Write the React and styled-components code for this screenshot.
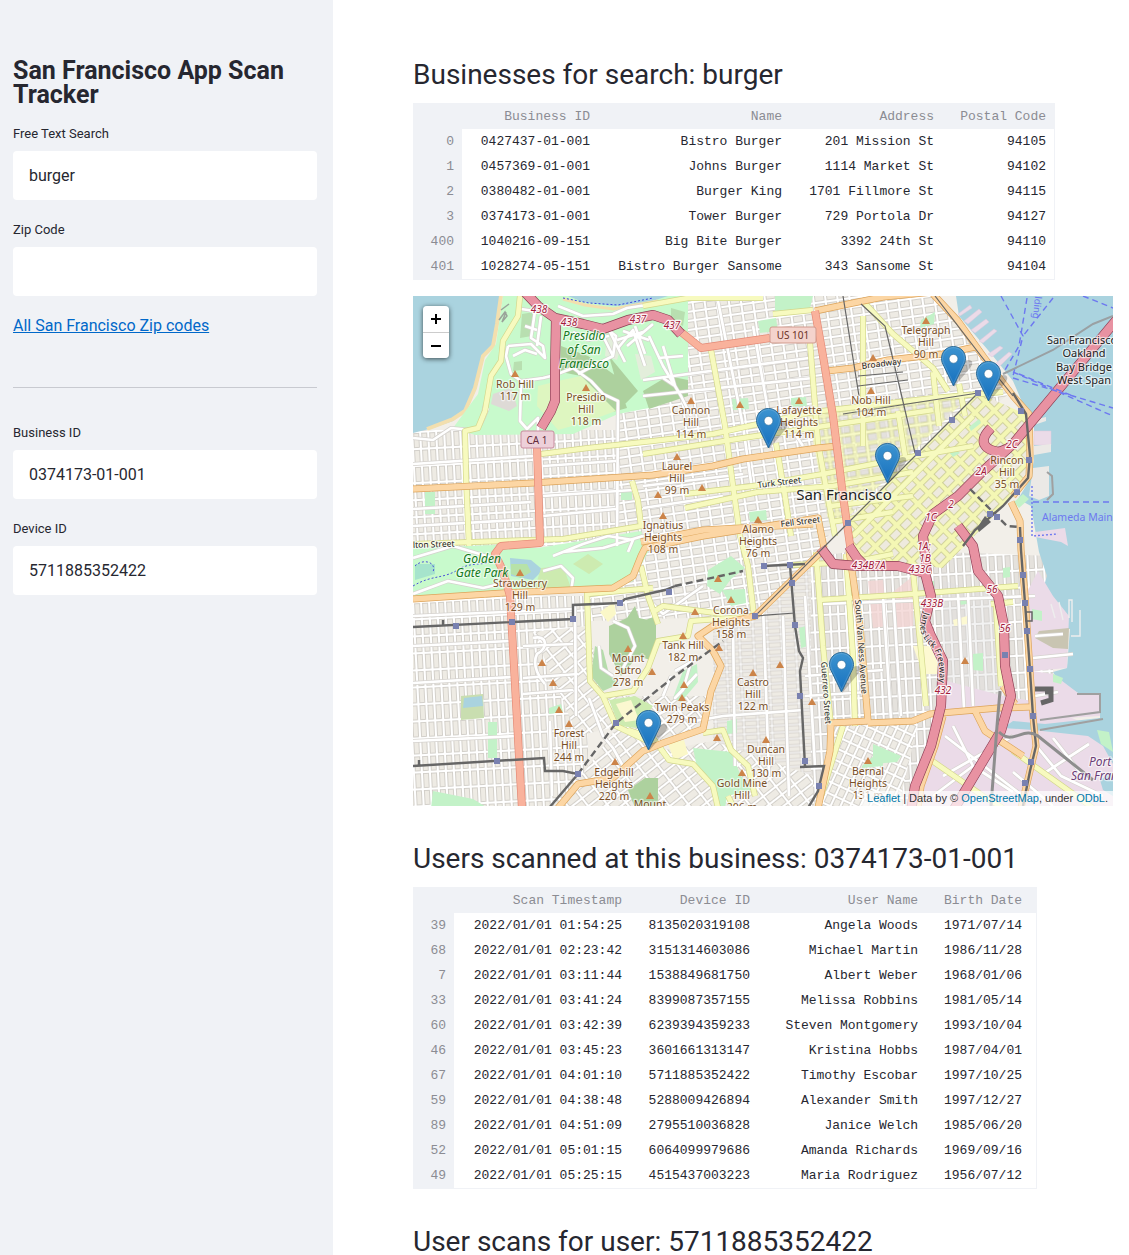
import React, { useState } from "react";
import styled, { createGlobalStyle } from "styled-components";

const sans = '"Roboto", "Liberation Sans", sans-serif';
const mono = '"Liberation Mono", monospace';
const ink = "#262730";
const panel = "#f0f2f6";

const GlobalStyle = createGlobalStyle`
  *, *::before, *::after { box-sizing: border-box; }
  body { margin: 0; background: #fff; color: ${ink}; font-family: ${sans}; }
`;

/* ---------- layout ---------- */

const Shell = styled.div`
  display: flex;
  height: 100vh;
`;

const Sidebar = styled.aside`
  flex: 0 0 333px;
  padding: 59px 16px 16px 13px;
  background: ${panel};
  overflow: hidden;
`;

const Title = styled.h1`
  margin: 0 0 17px;
  font-size: 25px;
  line-height: 24px;
  font-weight: 700;
`;

const FieldBox = styled.div`
  display: flex;
  flex-direction: column;
  gap: 7px;
  margin-bottom: 20px;
`;

const Label = styled.label`
  font-size: 13px;
  line-height: 20px;
`;

const TextInput = styled.input`
  width: 100%;
  height: 49px;
  padding: 0 16px;
  border: 0;
  border-radius: 4px;
  background: #fff;
  color: ${ink};
  font-family: ${sans};
  font-size: 16px;
`;

const ZipLink = styled.a`
  display: block;
  width: fit-content;
  color: #0068c9;
  font-size: 16px;
  line-height: 20px;
`;

const Divider = styled.hr`
  margin: 51px 0 35px;
  border: 0;
  border-top: 1px solid #c8cad0;
`;

const Main = styled.main`
  flex: 1;
  min-width: 0;
  padding: 22px 16px 16px 80px;
  overflow-y: auto;
  scrollbar-width: none;
`;

const Heading = styled.h2`
  margin: 0;
  padding: 35px 0 10px;
  font-size: 28px;
  line-height: 36px;
  font-weight: 400;
`;

/* ---------- tables ---------- */

const Table = styled.table`
  table-layout: fixed;
  width: ${(p) => p.$width}px;
  border-collapse: separate;
  border-spacing: 0;
  border: 1px solid ${panel};
  font-family: ${mono};
  font-size: 13px;
`;

const Cell = styled.td`
  height: 25px;
  padding: 0 8px;
  text-align: right;
  white-space: nowrap;
  &:last-child { padding-right: ${(p) => p.$end}px; }
`;

const HeadCell = styled(Cell)`
  background: ${panel};
  color: #8b8c93;
  font-weight: 400;
`;

function DataTable({ columns, widths, rows, end }) {
  return (
    <Table $width={widths.reduce((a, b) => a + b, 2)}>
      <colgroup>
        {widths.map((w, i) => <col key={i} width={w} />)}
      </colgroup>
      <thead>
        <tr>
          <HeadCell as="td" />
          {columns.map((c) => <HeadCell as="th" scope="col" key={c} $end={end}>{c}</HeadCell>)}
        </tr>
      </thead>
      <tbody>
        {rows.map(([id, ...cells]) => (
          <tr key={id}>
            <HeadCell as="th" scope="row">{id}</HeadCell>
            {cells.map((c, i) => <Cell key={i} $end={end}>{c}</Cell>)}
          </tr>
        ))}
      </tbody>
    </Table>
  );
}

const businesses = [
  ["0", "0427437-01-001", "Bistro Burger", "201 Mission St", "94105"],
  ["1", "0457369-01-001", "Johns Burger", "1114 Market St", "94102"],
  ["2", "0380482-01-001", "Burger King", "1701 Fillmore St", "94115"],
  ["3", "0374173-01-001", "Tower Burger", "729 Portola Dr", "94127"],
  ["400", "1040216-09-151", "Big Bite Burger", "3392 24th St", "94110"],
  ["401", "1028274-05-151", "Bistro Burger Sansome", "343 Sansome St", "94104"],
];

const scans = [
  ["39", "2022/01/01 01:54:25", "8135020319108", "Angela Woods", "1971/07/14"],
  ["68", "2022/01/01 02:23:42", "3151314603086", "Michael Martin", "1986/11/28"],
  ["7", "2022/01/01 03:11:44", "1538849681750", "Albert Weber", "1968/01/06"],
  ["33", "2022/01/01 03:41:24", "8399087357155", "Melissa Robbins", "1981/05/14"],
  ["60", "2022/01/01 03:42:39", "6239394359233", "Steven Montgomery", "1993/10/04"],
  ["46", "2022/01/01 03:45:23", "3601661313147", "Kristina Hobbs", "1987/04/01"],
  ["67", "2022/01/01 04:01:10", "5711885352422", "Timothy Escobar", "1997/10/25"],
  ["59", "2022/01/01 04:38:48", "5288009426894", "Alexander Smith", "1997/12/27"],
  ["89", "2022/01/01 04:51:09", "2795510036828", "Janice Welch", "1985/06/20"],
  ["52", "2022/01/01 05:01:15", "6064099979686", "Amanda Richards", "1969/09/16"],
  ["49", "2022/01/01 05:25:15", "4515437003223", "Maria Rodriguez", "1956/07/12"],
];

/* ---------- map ---------- */

const MapFrame = styled.div`
  position: relative;
  max-width: 700px;
  height: 510px;
  margin-top: 16px;
  overflow: hidden;
  background: #f2efe9;
`;

const MapDrawing = styled.svg`
  display: block;
  width: 100%;
  height: 100%;
  font-family: "Noto Sans", "Open Sans", sans-serif;
`;

const ZoomControl = styled.div`
  position: absolute;
  top: 10px;
  left: 10px;
  display: flex;
  flex-direction: column;
  width: 26px;
  border-radius: 4px;
  box-shadow: 0 1px 5px rgba(0, 0, 0, 0.65);
  overflow: hidden;
`;

const ZoomButton = styled.button`
  height: 26px;
  padding: 0;
  border: 0;
  background: #fff;
  color: #000;
  display: grid;
  place-items: center;
  & + & { border-top: 1px solid #ccc; }
`;

const Attribution = styled.div`
  position: absolute;
  right: 0;
  bottom: 0;
  padding: 0 5px;
  background: rgba(255, 255, 255, 0.7);
  color: #333;
  font-family: "Liberation Sans", Arial, sans-serif;
  font-size: 11px;
  line-height: 15px;
  a { color: #0078a8; text-decoration: none; }
`;

const roadStyles = {
  minor: ["#d5d2ce", "#ffffff", 4],
  yellow: ["#d3d78b", "#f7fabf", 6],
  orange: ["#dda45a", "#fcd6a4", 7],
  trunk: ["#e58a76", "#f9b29c", 8],
  motorway: ["#8d3f55", "#e892a2", 10],
};

const roads = {
  minor: [
    "M95 50L93 60L98 78L108 85L130 82L142 79L160 72L178 85L190 98L205 105L204 250",
    "M95 50L118 48L132 62L130 50L118 42L122 15L108 13M128 20L124 50M145 10L170 20L200 18L214 12L240 8",
    "M165 78L180 70L200 60L203 40L190 30M200 60L185 30M205 52L220 34L226 52L232 70M214 50L240 28M210 35L236 44",
    "M236 40L250 70L268 100L278 120M245 62L270 60M250 50L262 90L250 82M160 36L175 44L196 40M192 28L180 36M196 34L212 66M222 30L232 58M204 44L230 36",
    "M108 88L107 125L114 133L125 122L125 135M75 112L68 128L72 108M0 142L20 144L38 132L58 134M100 60L112 54L124 58M112 30L124 34",
    "M0 262L40 250L80 262M0 298L35 285L70 292L95 286M130 275L148 270L160 282L158 296M140 260L170 248L195 240L220 244L215 256M150 256L190 252L230 240",
    "M180 302L180 310M162 309L163 420M137 425L139 500M120 342C134 338 136 352 124 358C118 370 128 384 132 388",
    "M200 325L215 332L222 350L210 372M186 350L188 372L200 380M176 402L190 440L200 452L210 470M232 300L250 318L290 290",
    "M0 320L160 313M410 308L622 300M0 387L98 381M0 350L96 345M110 382L165 378M0 445L105 440M110 398L160 394M110 350L160 348",
    "M262 375L278 366L270 394L262 402L284 378M258 380L250 400M242 420L262 410L270 420L282 425L310 420L390 414",
    "M305 5L318 70L330 130L340 200M340 30L356 120M230 84L396 62M230 100L400 82M230 190L330 178M230 212L310 200M370 120L390 150",
    "M320 330L322 470M350 310L356 480M370 320L376 500M392 300L402 470M392 380L470 374M392 400L455 396",
    "M480 296L488 420M470 300L478 424M555 296L560 410M545 298L551 412M532 440L610 500M530 480L600 440M520 500L560 470M540 430L560 470L600 496",
    "M0 168L120 160M130 170L203 165M0 213L118 206M0 230L120 223M130 200L220 194M130 220L203 213",
    "M620 362L660 358M622 340L650 338M622 400L645 396M625 452L648 480L690 500M640 442L670 480M630 478L676 448M600 476L640 510",
  ],
  yellow: [
    "M107 0L105 20L90 45L88 65L78 80L72 115L65 132L52 135L53 180L56 250",
    "M128 158L175 152L240 145L300 138L400 116L520 102L590 96",
    "M230 158L330 142L425 128L520 114",
    "M0 248L150 243L228 230L225 205L219 185",
    "M298 54L312 130L320 190L327 240L335 270L341 320",
    "M363 147L372 200L378 240M397 47L405 147L422 240",
    "M272 198L340 190L410 178L480 164L560 150M272 212L345 196L420 190L500 176",
    "M230 10L275 2L350 2M360 18L400 14M450 5L480 38L520 72L535 95M520 76L526 130M546 88L552 120",
    "M174 296L177 385L190 400L203 430L220 438L245 450M174 298L240 292M190 400L220 395L235 372L245 345L275 340L278 325L345 320",
    "M215 434L240 442L256 464L280 468L300 490L305 512M290 437L310 434L318 454L335 470L342 500M315 500L320 510",
    "M403 256L410 350L418 430M433 258L440 360L442 430M500 275L508 355L513 410M583 310L588 390",
    "M240 316L250 310L310 318M228 270L235 300L245 328",
    "M405 304L500 298L605 290M578 308L600 306M430 430L405 510M515 462L570 500L590 512M600 455L680 512",
    "M380 269L440 266L480 258M418 210L500 200M418 226L480 216M440 240L500 180L560 120M485 115L492 160M450 20L450 150",
  ],
  orange: [
    "M0 193L120 187L240 179L300 170L330 163L405 152L425 150",
    "M0 303L90 297L200 292L220 280L228 260L232 252L290 240L405 222L411 252",
    "M228 246L290 234L400 228",
    "M402 15L440 7L470 1L520 -4M414 75L440 72L475 64L530 58L562 51",
    "M520 -2L545 25L570 60L600 100L616 118L617 160L616 180L600 200",
    "M598 206L607 225L608 254L612 300L616 360L620 420L623 450L617 475L608 512",
    "M410 254L342 320L300 330L285 340L300 355L308 370L298 395L290 433L250 447L230 455L200 482L165 488L145 512",
    "M436 254L447 330L455 425L418 427L417 455L405 512",
    "M455 427L500 425L517 418L585 412L617 411M562 415L572 435L610 460M530 420L522 450L508 490L505 512M590 390L602 408",
  ],
  trunk: [
    "M124 150L127 247L88 250L82 258L90 275L97 300L101 370L106 460L109 512",
    "M268 36L288 52L357 42M402 15L410 60L420 120L430 200L438 256",
  ],
  motorway: [
    "M108 -8L125 10L142 22L170 28L190 33L215 24L240 19L255 24L268 38",
    "M143 22L142 75L142 105L138 115L128 132",
    "M408 252L420 268L445 270L485 270L512 277L518 300L512 325L518 340L530 365L528 410L518 450L502 490L498 515",
    "M514 278L510 240L520 218L545 200L570 175L600 148L705 22",
    "M545 230L560 250L565 275L585 300L591 330L592 370L598 400L588 435L570 465L540 515",
    "M578 132C564 146 572 154 586 156L596 152",
    "M436 250L444 262L452 270",
  ],
};

const peaks = [
  ["Rob Hill|117 m", 102, 92], ["Presidio|Hill|118 m", 173, 105], ["Cannon|Hill|114 m", 278, 118],
  ["Lafayette|Heights|114 m", 386, 118], ["Nob Hill|104 m", 458, 108], ["Telegraph|Hill|90 m", 513, 38],
  ["Laurel|Hill|99 m", 264, 174], ["Ignatius|Heights|108 m", 250, 233], ["Alamo|Heights|76 m", 345, 237],
  ["Strawberry|Hill|129 m", 107, 291], ["Corona|Heights|158 m", 318, 318], ["Tank Hill|182 m", 270, 353],
  ["Mount|Sutro|278 m", 215, 366], ["Twin Peaks|279 m", 269, 415], ["Castro|Hill|122 m", 340, 390],
  ["Forest|Hill|244 m", 156, 441], ["Edgehill|Heights|220 m", 201, 480], ["Duncan|Hill|130 m", 353, 457],
  ["Gold Mine|Hill|206 m", 329, 491], ["Bernal|Heights|131 m", 455, 479], ["Rincon|Hill|35 m", 594, 168],
  ["Mount", 237, 512],
];

const triangles = [
  [102, 78], [173, 92], [278, 105], [327, 109], [386, 105], [460, 62], [458, 95], [513, 25], [264, 161],
  [245, 199], [289, 192], [250, 220], [345, 224], [107, 277], [318, 304], [305, 283], [282, 316], [270, 340],
  [129, 367], [140, 387], [146, 414], [156, 428], [215, 353], [239, 376], [271, 389], [269, 402], [306, 352],
  [367, 369], [340, 377], [399, 406], [304, 442], [353, 444], [329, 477], [202, 466], [237, 500], [455, 465], [552, 365],
];

const stations = [
  [43, 330], [99, 326], [160, 323], [207, 307], [256, 296], [351, 270], [377, 269], [379, 287], [342, 320],
  [382, 329], [387, 400], [392, 465], [406, 490], [203, 427], [165, 478], [84, 465], [435, 227], [505, 157],
  [539, 124], [565, 97], [608, 115], [616, 164], [604, 196], [577, 218], [584, 221], [607, 244], [610, 279],
  [612, 307], [614, 335], [592, 359], [617, 373], [620, 420], [618, 466], [612, 487],
];

const refs = [
  ["438", 126, 17], ["438", 156, 30], ["437", 225, 27], ["437", 259, 33], ["2C", 599, 152], ["2A", 568, 179],
  ["2", 538, 212], ["1C", 518, 225], ["1A;", 511, 254], ["1B", 512, 266], ["434B", 450, 273], ["7A", 467, 273],
  ["433C", 507, 277], ["433B", 519, 311], ["432", 530, 398], ["56", 579, 297], ["56", 592, 336],
];

const pins = [[355, 153], [540, 91], [575, 106], [474, 188], [428, 397], [235, 455]];

const greens = [
  "M362 0H400L396 16L362 20Z", "M345 25l18 -3 2 13 -18 2z", "M319 103l16 -1 1 11 -16 1z", "M378 102l15 -1 1 9 -16 1z",
  "M336 216l17 -2 1 10 -17 2z", "M295 274L318 260L332 272L318 283L307 298L294 290Z", "M309 294L332 293L333 307L318 310Z",
  "M386 332l7 -2 2 20 -7 2z", "M270 375L284 368L285 386L268 406L260 402Z", "M136 412l12 -4 2 8 -14 2z",
  "M280 452L318 456L328 480L340 494L314 500L312 512H302L300 490L284 472Z", "M449 470L470 452V470L449 472Z",
  "M12 196h10v22h-10z", "M75 426h9v36h-9z", "M560 358l10 -1v18l-10 -1z", "M508 24l14 -8 -1 12 -14 4z",
  "M556 131l10 -8 2 4 -10 8z", "M601 206l9 -8 6 5 -10 9z", "M208 196h11v8h-11z", "M590 272l7 -1v10l-7 1z",
  "M619 313l10 2v10l-10 -2zM640 378l10 4 -2 6 -8 -2z", "M460 448L488 460L484 466L460 468Z", "M684 434l12 2 4 20 -12 -8z",
  "M515 285h6v8h-6zM546 302l8 -1v7l-8 1zM535 155l6 -4 6 6 -7 4zM314 425l10 -2v14l-10 1z", "M20 495L60 503L75 512H18Z",
];

function Peak({ text, x, y }) {
  return (
    <text x={x} y={y} textAnchor="middle">
      {text.split("|").map((line, i) => <tspan key={i} x={x} dy={i ? 12 : 0}>{line}</tspan>)}
    </text>
  );
}

function Pin({ x, y }) {
  return (
    <g transform={`translate(${x - 12} ${y - 41})`}>
      <path d="M13 41L29 22C34 16 30 12 24 15C18 18 15 30 13 41Z" fill="#000" opacity="0.22" />
      <path d="M12.5 0.5C5.6 0.5 0.5 5.9 0.5 12.6C0.5 15.4 1.7 18 3 20.4L12.5 40L22 20.4C23.3 18 24.5 15.4 24.5 12.6C24.5 5.9 19.4 0.5 12.5 0.5Z" fill="url(#pinFill)" stroke="#2e6c97" />
      <path d="M12.5 1.6C6.2 1.6 1.6 6.6 1.6 12.6C1.6 15.2 2.7 17.6 4 20L12.5 37.4L21 20C22.3 17.6 23.4 15.2 23.4 12.6C23.4 6.6 18.8 1.6 12.5 1.6Z" fill="none" stroke="#fff" strokeOpacity="0.15" />
      <circle cx="12.5" cy="12.8" r="4.4" fill="#fff" stroke="#2e6c97" strokeWidth="0.6" />
    </g>
  );
}

function Blocks({ id, w, h, angle, street = "#fff", block = "#eeebe4", edge = "#cbc7c1", gap = 3 }) {
  return (
    <pattern id={id} width={w} height={h} patternUnits="userSpaceOnUse" patternTransform={`rotate(${angle})`}>
      <rect width={w} height={h} fill={street} />
      <rect x={gap / 2} y={gap / 2} width={w - gap} height={h - gap} fill={block} stroke={edge} strokeWidth="0.8" />
    </pattern>
  );
}

function CityMap() {
  return (
    <MapDrawing viewBox="0 0 700 510" preserveAspectRatio="xMinYMin slice" role="img" aria-label="Map of San Francisco">
      <defs>
        <linearGradient id="pinFill" x1="0" y1="0" x2="0" y2="1">
          <stop offset="0" stopColor="#3d94d0" />
          <stop offset="1" stopColor="#1670be" />
        </linearGradient>
        <Blocks id="west" w={8} h={17} angle={-3} />
        <Blocks id="north" w={12} h={9} angle={-8} />
        <Blocks id="mid" w={14} h={7} angle={-3} gap={2} />
        <Blocks id="mission" w={8} h={17} angle={-3} block="#e5e2dd" />
        <Blocks id="downtown" w={11} h={9} angle={-8} block="#dfdddd" />
        <Blocks id="soma" w={15} h={12} angle={-45} street="#f4f7b4" block="#eeeade" edge="#c9cb92" gap={5} />
        <Blocks id="south" w={9} h={11} angle={25} />
        <Blocks id="hills" w={16} h={10} angle={-38} />
        <Blocks id="civic" w={13} h={11} angle={-8} street="#f4f7b4" block="#e5e2dd" edge="#c9cb92" gap={4} />
      </defs>

      <rect width="700" height="510" fill="#f2efe9" />
      <path d="M0 134H205V250H0Z" fill="url(#west)" />
      <path d="M0 300H175V510H0Z" fill="url(#west)" />
      <path d="M205 115L275 100V0H520L600 95L430 225L205 250Z" fill="url(#north)" />
      <path d="M205 245L430 220L400 260L342 320L175 325V290Z" fill="url(#north)" />
      <path d="M300 322L342 320L400 262V510H300Z" fill="url(#mid)" />
      <path d="M398 262L440 255H500L640 260V510H398Z" fill="url(#mission)" />
      <path d="M530 285L583 300L592 410H530Z" fill="#dfdede" />
      <path d="M530 285L583 300L592 410H530Z" fill="url(#mission)" opacity="0.6" />
      <path d="M430 110L560 92L432 222Z" fill="url(#downtown)" />
      <path d="M395 118L560 96L432 224L415 224Z" fill="url(#civic)" opacity="0.75" />
      <path d="M565 97L612 118L616 170L600 200L530 272L440 262L432 228Z" fill="url(#soma)" />
      <path d="M120 336L175 330L190 400L300 400L290 435L250 447L235 512H145L205 430L165 440Z" fill="url(#hills)" />
      <path d="M165 490L230 458L300 445L400 480V512H145Z" fill="url(#hills)" />
      <path d="M420 430L505 428L485 512H400Z" fill="url(#south)" />
      <path d="M534 385L590 400L620 405L700 440V512H500L530 430Z" fill="#ebdbe8" />
      <path d="M455 285L470 284L474 330L460 332ZM500 280L500 330L480 332V296Z" fill="#f3d5d3" opacity="0.8" />
      <path d="M500 350H520L528 378H510ZM540 324L554 320V328L541 330Z" fill="#fdf9d2" />

      {/* ocean, bay and shore */}
      <path d="M0 0H88L84 28L80 50L70 60L62 92L52 115L40 125L20 132L0 137Z" fill="#aad3df" />
      <path d="M88 0L84 28L80 50L70 60L62 92L52 115L40 123L14 133" fill="none" stroke="#f3dfae" strokeWidth="4" />
      <path d="M543 0L546 20L580 60L600 85L613 115L621 125V165L616 185L605 203L618 210L626 256L634 280L625 310L620 313L630 325L648 333L657 333L654 372L640 376L646 386L665 397H687V422L632 428L600 425L590 432L620 434L675 440L690 450L700 468V0Z" fill="#aad3df" />
      <path d="M687 484L700 476V500L690 494Z" fill="#aad3df" />
      <path d="M625 275L640 300L656 320L654 372L620 375L612 300Z" fill="#ebdbe8" />
      <path d="M619 375L640 378L665 397H687V420L622 424Z" fill="#ebdbe8" />
      <path d="M626 335L656 332L655 353L640 352L622 342Z" fill="#c9c5b2" />
      <path d="M621 135h17v14h-17zM545 18l12 -9 2 3 -12 8zM551 25l15 -12 3 3 -14 12zM558 34l15 -11 3 3 -14 11zM566 45l15 -12 3 2 -14 12zM575 58l12 -8 3 2 -11 9zM582 68l14 -12 3 2 -13 13z" fill="#ebdbe8" stroke="#dfc9dc" strokeWidth="0.5" />
      <path d="M620 124l13 -3v4l-12 4zM621 150l17 -2v8l-17 3zM620 172l16 -2v30l-10 4 -10 -4z" fill="#ebe9e6" />
      <path d="M622 236L652 232L655 250L648 246L622 241Z" fill="#ebdbe8" />
      <path d="M634 176L639 180L640 198L634 204M627 434L690 423M627 424L687 416V398H664" fill="none" stroke="#a0a0a0" strokeWidth="2" />

      {/* Presidio */}
      <path d="M90 0H275V95L236 112L205 118L160 138L62 139L40 132L65 98L72 64L83 48Z" fill="#c8facc" />
      <path d="M148 50L175 60L203 80L214 112L200 116L188 100L168 80L148 76ZM230 95L255 80L275 84V100L236 113ZM196 60L225 95L210 110Z" fill="#add19e" />
      <path d="M145 85L168 80L186 98L203 115L170 127L145 134L124 110L125 90Z" fill="#def6c0" />
      <path d="M80 98L98 92L104 110L96 115L78 108Z" fill="#dedad6" />
      <path d="M155 0H255L230 8L200 10L170 6Z" fill="#aad3df" />
      <path d="M150 3L172 9L200 13L245 5" fill="none" stroke="#f3dfae" strokeWidth="3" />
      <path d="M150 2L176 7L205 9L240 2" fill="none" stroke="#3b45e0" strokeDasharray="2 2" />
      <path d="M109 18l12 -2 -2 24 -12 2zM101 66l8 -1v9l-9 1zM258 12l14 4 -2 14 -12 -6z" fill="#b8dfb0" />
      <path d="M194 40l16 4 -6 20 -12 -4zM222 58l16 2 4 16 -14 8z" fill="#e3eedb" />
      <path d="M86 24l6 -8 2 4 -5 6 4 -10M88 14l8 -6" fill="none" stroke="#9aa39a" strokeWidth="1.5" />

      {/* Golden Gate Park and hills */}
      <path d="M0 252L80 249L125 252L228 235L236 254L220 285L200 291L0 302Z" fill="#c8facc" />
      <path d="M97 262L118 264L130 274L120 284L98 280Z" fill="#aad3df" />
      <path d="M98 268l16 0 4 8 -10 6 -10 -4z" fill="#b7e2a8" />
      <path d="M128 272L150 270L158 292L122 292ZM160 268L175 258L190 268L176 278Z" fill="#cdebb0" />
      <path d="M2 268h20v10l-20 6z" fill="#a6e4cc" />
      <path d="M0 290C20 278 30 284 48 272C60 266 70 270 84 264M2 270C10 262 24 266 20 276" fill="none" stroke="#4c53d8" strokeDasharray="2 2" />
      <path d="M196 330L214 322L222 310L226 322L240 325V365L225 360L208 380L196 358ZM230 325L243 320V352L232 350Z" fill="#add19e" />
      <path d="M182 350L190 354L196 378L206 388L190 395L178 380Z" fill="#b5dcab" />
      <path d="M196 404L222 400L240 410L224 432L206 430Z" fill="#cdebb0" />
      <path d="M203 408L218 404L226 424L212 426Z" fill="#fbf8d0" />
      <path d="M215 494L232 482H245V512H222Z" fill="#add19e" />
      <path d="M48 400L70 398L71 422L48 424Z" fill="#c9deb0" />
      <path d="M51 402L69 400L70 410L50 412Z" fill="#aad3df" />
      <path d="M187 316l14 -10 2 12 -8 8zM255 448l16 -4 4 14 -14 6z" fill="#fbf8c8" />
      {greens.map((d) => <path key={d} d={d} fill="#c3f2c8" />)}

      {/* roads */}
      {Object.entries(roads).map(([kind, list]) => {
        const [casing, fill, width] = roadStyles[kind];
        return (
          <g key={kind} fill="none" strokeLinejoin="round">
            {list.map((d) => <path key={`c${d}`} d={d} stroke={casing} strokeWidth={width} />)}
            {list.map((d) => <path key={`f${d}`} d={d} stroke={fill} strokeWidth={width - 1.3} />)}
          </g>
        );
      })}

      {/* railways */}
      <g fill="none" stroke="#666" strokeWidth="2.4">
        <path d="M0 331L160 323V309L207 307L212 303L252 294L262 290M30 329V324M350 270L392 268M377 269L382 330L386 355L390 362L387 375L392 470M387 471L411 470L405 495L395 512M0 470L131 462L132 475H150L165 478L136 512M6 469V464" />
        <path d="M262 290L330 275M165 478L203 427L262 380L310 345M557 193L594 230L607 231" strokeDasharray="7 4" />
        <path d="M600 97L613 118L617 160L615 182L590 210L562 234L550 250M607 231L608 254L616 360L620 420L623 450L617 475L610 510" />
        <path d="M522 0L568 60L600 100M565 97L435 227L342 320L382 317M430 118L565 97M430 0L446 100M448 8L472 30L484 80L502 157M445 90L495 84M445 80L490 76" strokeWidth="1.2" />
        <path d="M587 395L584 430L578 510M586 436C600 450 610 430 625 440L650 460L680 484" stroke="#8d8d8d" strokeWidth="3" />
        <path d="M622 393H638V404L628 407M632 396H640" strokeWidth="5" />
        <path d="M613 316h6v9h-6z" strokeWidth="1.5" />
      </g>
      <path d="M564 232L572 220L578 226L566 236Z" fill="#666" />
      <path d="M590 78L640 54L680 28L700 20" fill="none" stroke="#9aa0a3" strokeWidth="2" />
      <g fill="none" stroke="#6d78f0" strokeWidth="1.4" strokeDasharray="6 4">
        <path d="M588 0L610 40L600 80M614 2L606 50L592 74M640 2L610 40M600 82L700 112M600 76L700 120M606 78L660 100M670 0L700 12M620 206L700 206" />
        <path d="M619 190V240L645 238" strokeDasharray="2 2" />
      </g>
      <path d="M638 308L642 322M646 306L650 324M656 322V304H659V326M667 314V340H658" fill="none" stroke="#eee" strokeWidth="1.4" />

      {stations.map(([x, y]) => <path key={`${x}-${y}`} d={`M${x - 3} ${y - 3}h6v6h-6z`} fill="#7981b0" />)}
      {triangles.map(([x, y]) => <path key={`${x}-${y}`} d={`M${x - 4} ${y + 3}h8l-4 -7z`} fill="#cc8449" />)}

      {/* labels */}
      <g stroke="#fff" strokeOpacity="0.6" strokeWidth="2.5" strokeLinejoin="round" paintOrder="stroke" fontSize="10.5">
        <g fill="#7a4f27">
          {peaks.map(([text, x, y]) => <Peak key={text + x} text={text} x={x} y={y} />)}
        </g>
        <g fill="#157a21" fontStyle="italic" fontSize="12">
          <text textAnchor="middle"><tspan x="171" y="44">Presidio</tspan><tspan x="171" y="58">of San</tspan><tspan x="171" y="72">Francisco</tspan></text>
          <text textAnchor="middle"><tspan x="69" y="267">Golden</tspan><tspan x="69" y="281">Gate Park</tspan></text>
        </g>
        <text fill="#222" fontSize="15" x="431" y="204" textAnchor="middle">San Francisco</text>
        <text fill="#222" fontSize="11" textAnchor="middle">
          <tspan x="669" y="48">San Francisco</tspan><tspan x="671" y="61">Oakland</tspan>
          <tspan x="671" y="75">Bay Bridge</tspan><tspan x="671" y="88">West Span</tspan>
        </text>
        <text fill="#6b3d76" fontStyle="italic" fontSize="12"><tspan x="676" y="470">Port</tspan><tspan x="658" y="484">San Fran</tspan></text>
        <g fill="#a31c3c" fontStyle="italic" fontSize="10" textAnchor="middle" strokeOpacity="0.9">
          {refs.map(([t, x, y]) => <text key={t + x} x={x} y={y}>{t}</text>)}
        </g>
        <g fill="#222" fontSize="8.5">
          <text x="0" y="252" transform="rotate(-2 0 252)">lton Street</text>
          <text x="345" y="192" transform="rotate(-7 345 192)">Turk Street</text>
          <text x="368" y="231" transform="rotate(-7 368 231)">Fell Street</text>
          <text x="449" y="73" transform="rotate(-7 449 73)">Broadway</text>
          <text x="442" y="304" transform="rotate(86 442 304)">South Van Ness Avenue</text>
          <text x="408" y="366" transform="rotate(86 408 366)">Guerrero Street</text>
          <path id="lick" d="M511 316L507 330Q508 343 520 352Q528 364 526 386" fill="none" stroke="none" />
          <text><textPath href="#lick">James Lick Freeway</textPath></text>
        </g>
      </g>
      <text x="629" y="225" fontSize="10.5" fill="#6d78f0">Alameda Main St</text>
      <text x="622" y="0" fontSize="9.5" fill="#6d78f0" transform="rotate(96 622 0)">lding</text>

      <g fontSize="10" textAnchor="middle">
        <rect x="108" y="135" width="33" height="17" rx="2" fill="#edd0d9" stroke="#c98c9f" />
        <text x="124" y="148" fill="#642b3c">CA 1</text>
        <rect x="357" y="31" width="46" height="16" rx="2" fill="#f4d3cc" stroke="#d19a8d" />
        <text x="380" y="43" fill="#6b3227">US 101</text>
      </g>

      {pins.map(([x, y]) => <Pin key={x} x={x} y={y} />)}
    </MapDrawing>
  );
}

function Field({ id, label, initial }) {
  const [value, setValue] = useState(initial);
  return (
    <FieldBox>
      <Label htmlFor={id}>{label}</Label>
      <TextInput id={id} type="text" value={value} onChange={(e) => setValue(e.target.value)} />
    </FieldBox>
  );
}

export default function App() {
  return (
    <>
      <GlobalStyle />
      <Shell>
        <Sidebar>
          <Title>San Francisco App Scan Tracker</Title>
          <Field id="search" label="Free Text Search" initial="burger" />
          <Field id="zip" label="Zip Code" initial="" />
          <ZipLink href="#zip-codes">All San Francisco Zip codes</ZipLink>
          <Divider />
          <Field id="business" label="Business ID" initial="0374173-01-001" />
          <Field id="device" label="Device ID" initial="5711885352422" />
        </Sidebar>
        <Main>
          <Heading>Businesses for search: burger</Heading>
          <DataTable
            columns={["Business ID", "Name", "Address", "Postal Code"]}
            widths={[48, 136, 192, 152, 112]}
            rows={businesses}
            end={8}
          />
          <MapFrame>
            <CityMap />
            <ZoomControl>
              <ZoomButton type="button" aria-label="Zoom in">
                <svg width="12" height="12" stroke="#000" strokeWidth="2"><path d="M1 6H11M6 1V11" /></svg>
              </ZoomButton>
              <ZoomButton type="button" aria-label="Zoom out">
                <svg width="12" height="12" stroke="#000" strokeWidth="2"><path d="M1 6H11" /></svg>
              </ZoomButton>
            </ZoomControl>
            <Attribution>
              <a href="#leaflet">Leaflet</a> | Data by © <a href="#osm">OpenStreetMap</a>, under <a href="#odbl">ODbL</a>.
            </Attribution>
          </MapFrame>
          <Heading>Users scanned at this business: 0374173-01-001</Heading>
          <DataTable
            columns={["Scan Timestamp", "Device ID", "User Name", "Birth Date"]}
            widths={[40, 176, 128, 168, 110]}
            rows={scans}
            end={14}
          />
          <Heading>User scans for user: 5711885352422</Heading>
        </Main>
      </Shell>
    </>
  );
}
